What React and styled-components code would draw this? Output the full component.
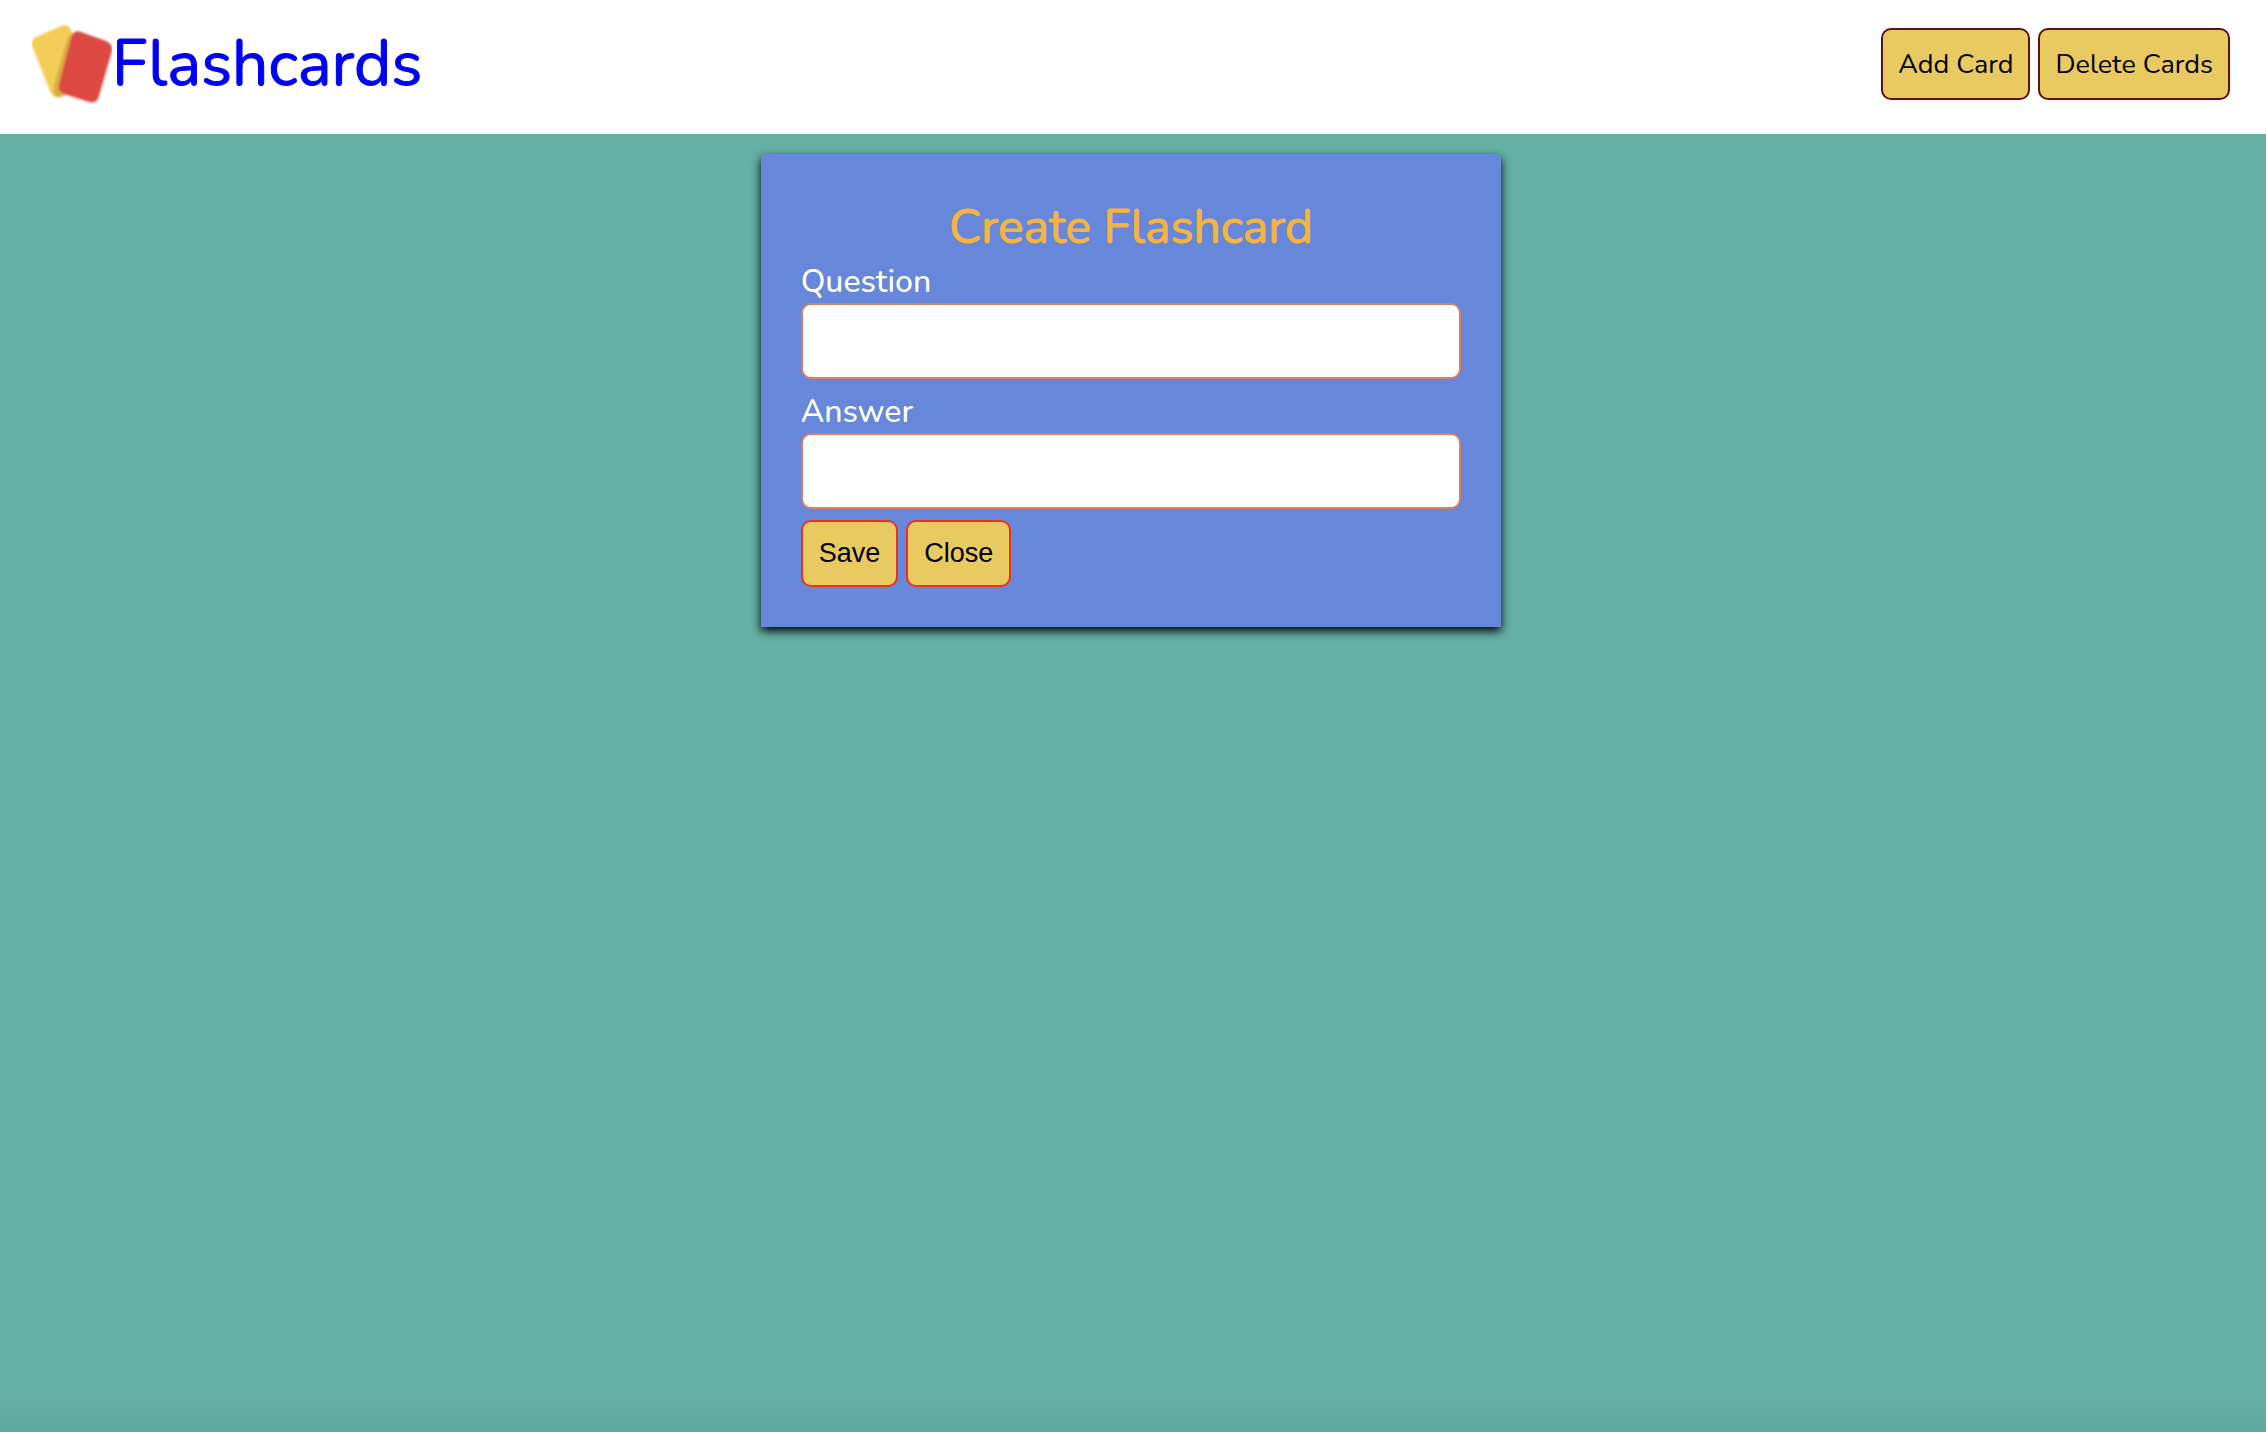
import React, { useState } from "react";
import styled, { createGlobalStyle } from "styled-components";

const GlobalStyle = createGlobalStyle`
  *, *::before, *::after {
    box-sizing: border-box;
  }
  body {
    margin: 0;
    font-family: Nunito, Lato, sans-serif;
    background: #64b0a3;
  }
`;

const Page = styled.div`
  display: flex;
  flex-direction: column;
  min-height: 100vh;
  background: linear-gradient(to top, #5fa99c, #64b0a3 40px);
`;

const Header = styled.header`
  display: flex;
  align-items: center;
  justify-content: space-between;
  padding: 24px 36px 30px 32px;
  background: #ffffff;
`;

const Brand = styled.a`
  display: flex;
  align-items: center;
  color: #0000f5;
  font-size: 64px;
  font-weight: 400;
  line-height: 80px;
  text-decoration: none;
  -webkit-text-stroke: 1px currentColor;
`;

const Logo = styled.svg`
  width: 80px;
  height: 80px;
`;

const Row = styled.div`
  display: flex;
  gap: 8px;
`;

const Button = styled.button`
  padding: 16px;
  border: 2px solid ${({ $border }) => $border};
  border-radius: 10px;
  background: #e8ca60;
  color: #000000;
  cursor: pointer;
`;

const NavButton = styled(Button)`
  padding: 17px 15px 15px;
  font: 27px / 36px Nunito, Lato, sans-serif;
`;

const FormButton = styled(Button)`
  font: 27px / 31px "Liberation Sans", Arial, sans-serif;
`;

const Main = styled.main`
  display: flex;
  justify-content: center;
  padding: 20px 24px 20px 20px;
`;

const Card = styled.form`
  display: flex;
  flex-direction: column;
  width: calc(100% / 3);
  padding: 40px;
  border-radius: 4px 4px 0 0;
  background: #6787da;
  box-shadow: 0 4px 10px 0 #000000;
`;

const Title = styled.h2`
  margin: 0;
  color: #f4b43f;
  font-size: 48px;
  font-weight: 400;
  line-height: 66px;
  text-align: center;
  -webkit-text-stroke: 1px currentColor;
`;

const Label = styled.label`
  color: #ffffff;
  font-size: 32px;
  font-weight: 500;
  line-height: 43px;
`;

const Field = styled.input`
  width: 100%;
  height: 76px;
  margin-bottom: 11px;
  padding: 0 16px;
  border: 2px solid #d6806a;
  border-radius: 10px;
  background: #ffffff;
  font: 32px Nunito, Lato, sans-serif;
`;

function CardsLogo() {
  return (
    <Logo viewBox="0 0 80 80" aria-hidden="true">
      <defs>
        <clipPath id="yellowCard">
          <path d="M4 13 L29 2 Q36 -1 39 6 L58 52 Q60 58 54 61 L31 72 Q22 76 18 67 L0 22 Q-2 16 4 13Z" />
        </clipPath>
        <filter id="soften" x="-5%" y="-5%" width="110%" height="110%">
          <feGaussianBlur stdDeviation="0.8" />
        </filter>
      </defs>
      <g filter="url(#soften)">
        <path
          d="M4 13 L29 2 Q36 -1 39 6 L58 52 Q60 58 54 61 L31 72 Q22 76 18 67 L0 22 Q-2 16 4 13Z"
          fill="#f4cd58"
        />
        <g clipPath="url(#yellowCard)">
          <path d="M42 9 Q36 10 34 19 L22 61 Q20 70 25 76 L50 80 L60 10Z" fill="#d8ae42" />
        </g>
        <path
          d="M49 8 L74 17 Q81 20 80 27 L67 72 Q65 80 57 78 L32 70 Q25 67 27 60 L39 14 Q41 5 49 8Z"
          fill="#dc4a42"
        />
      </g>
    </Logo>
  );
}

export default function App() {
  const [question, setQuestion] = useState("");
  const [answer, setAnswer] = useState("");

  return (
    <Page>
      <GlobalStyle />
      <Header>
        <Brand href="#">
          <CardsLogo />
          Flashcards
        </Brand>
        <Row as="nav">
          <NavButton type="button" $border="#5e1212">Add Card</NavButton>
          <NavButton type="button" $border="#5e1212">Delete Cards</NavButton>
        </Row>
      </Header>
      <Main>
        <Card onSubmit={(event) => event.preventDefault()}>
          <Title>Create Flashcard</Title>
          <Label htmlFor="question">Question</Label>
          <Field id="question" value={question} onChange={(e) => setQuestion(e.target.value)} />
          <Label htmlFor="answer">Answer</Label>
          <Field id="answer" value={answer} onChange={(e) => setAnswer(e.target.value)} />
          <Row>
            <FormButton type="submit" $border="#e8321f">Save</FormButton>
            <FormButton type="button" $border="#e8321f">Close</FormButton>
          </Row>
        </Card>
      </Main>
    </Page>
  );
}
